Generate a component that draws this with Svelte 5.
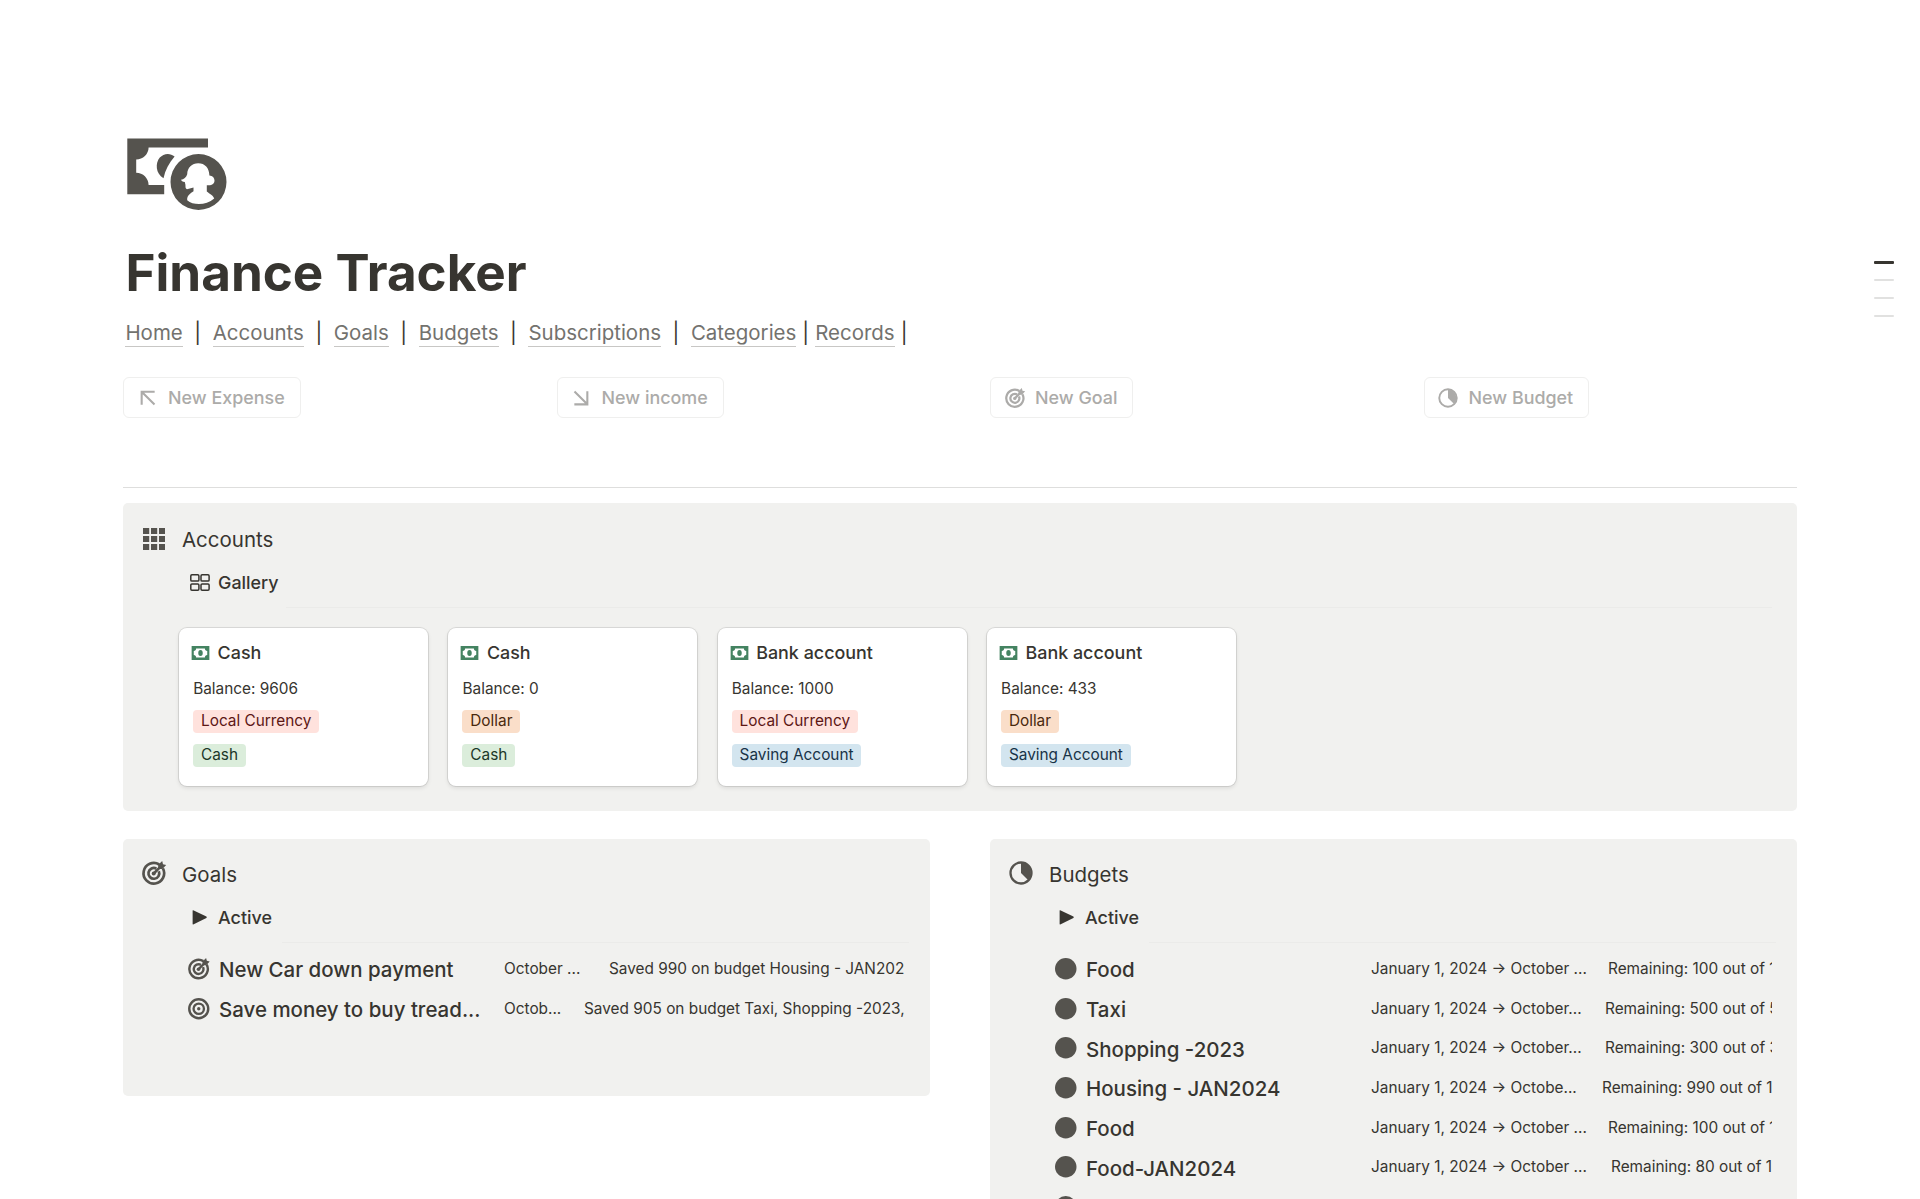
<script lang="ts">
  type Tag = { text: string; color: 'red' | 'orange' | 'green' | 'blue' };
  type Account = { name: string; balance: number; tags: Tag[] };
  type Row = { icon: string; name: string; date: string; dateWidth: number; note: string };

  const links = [
    { label: 'Home', tight: false },
    { label: 'Accounts', tight: false },
    { label: 'Goals', tight: false },
    { label: 'Budgets', tight: false },
    { label: 'Subscriptions', tight: false },
    { label: 'Categories', tight: true },
    { label: 'Records', tight: true }
  ];

  const actions = [
    { icon: 'up-left', label: 'New Expense' },
    { icon: 'down-right', label: 'New income' },
    { icon: 'goal', label: 'New Goal' },
    { icon: 'pie', label: 'New Budget' }
  ];

  const local: Tag = { text: 'Local Currency', color: 'red' };
  const dollar: Tag = { text: 'Dollar', color: 'orange' };
  const cash: Tag = { text: 'Cash', color: 'green' };
  const saving: Tag = { text: 'Saving Account', color: 'blue' };

  const accounts: Account[] = [
    { name: 'Cash', balance: 9606, tags: [local, cash] },
    { name: 'Cash', balance: 0, tags: [dollar, cash] },
    { name: 'Bank account', balance: 1000, tags: [local, saving] },
    { name: 'Bank account', balance: 433, tags: [dollar, saving] }
  ];

  const goals: Row[] = [
    { icon: 'goal', name: 'New Car down payment', date: 'October ...', dateWidth: 105, note: 'Saved 990 on budget Housing - JAN202' },
    { icon: 'target', name: 'Save money to buy tread...', date: 'Octob...', dateWidth: 80, note: 'Saved 905 on budget Taxi, Shopping -2023,' }
  ];

  const budgets: Row[] = [
    { icon: 'dot', name: 'Food', date: 'January 1, 2024 → October ...', dateWidth: 237, note: 'Remaining: 100 out of 1' },
    { icon: 'dot', name: 'Taxi', date: 'January 1, 2024 → October...', dateWidth: 234, note: 'Remaining: 500 out of 5' },
    { icon: 'dot', name: 'Shopping -2023', date: 'January 1, 2024 → October...', dateWidth: 234, note: 'Remaining: 300 out of 3' },
    { icon: 'dot', name: 'Housing - JAN2024', date: 'January 1, 2024 → Octobe...', dateWidth: 231, note: 'Remaining: 990 out of 1' },
    { icon: 'dot', name: 'Food', date: 'January 1, 2024 → October ...', dateWidth: 237, note: 'Remaining: 100 out of 1' },
    { icon: 'dot', name: 'Food-JAN2024', date: 'January 1, 2024 → October ...', dateWidth: 240, note: 'Remaining: 80 out of 1' },
    { icon: 'dot', name: '', date: '', dateWidth: 237, note: '' }
  ];

  const boards = [
    { title: 'Goals', icon: 'goal', rows: goals },
    { title: 'Budgets', icon: 'pie', rows: budgets }
  ];
</script>

{#snippet glyph(name: string)}
  <svg class="glyph" viewBox="0 0 24 24" aria-hidden="true">
    {#if name === 'up-left'}
      <path d="M4.4 20V4.4H20M4.4 4.4L19.8 19.8" fill="none" stroke="currentColor" stroke-width="2.5" />
    {:else if name === 'down-right'}
      <path d="M19.6 4V19.6H4M19.6 19.6L4.2 4.2" fill="none" stroke="currentColor" stroke-width="2.5" />
    {:else if name === 'goal'}
      <path
        d="M17.2 3.5A10.3 10.3 0 1 0 20.9 7.4M14.4 7.6A5.4 5.4 0 1 0 16.8 10.2M11.6 12.6L18.6 5.6"
        fill="none"
        stroke="currentColor"
        stroke-width="2.7"
      />
      <circle cx="11.7" cy="12.5" r="2" fill="currentColor" />
      <path d="M16.2 8V3.8L20.2 0L21 3.2L24.2 4L20.4 8Z" fill="currentColor" />
    {:else if name === 'target'}
      <circle cx="12" cy="12" r="10.6" fill="none" stroke="currentColor" stroke-width="2.7" />
      <circle cx="12" cy="12" r="5.8" fill="none" stroke="currentColor" stroke-width="2.6" />
      <circle cx="12" cy="12" r="1.9" fill="currentColor" />
    {:else if name === 'pie'}
      <circle cx="12" cy="12" r="10.5" fill="none" stroke="currentColor" stroke-width="2.3" />
      <path d="M12 2V12L19 19A10 10 0 0 0 12 2Z" fill="currentColor" />
    {:else if name === 'dot'}
      <circle cx="12" cy="12" r="12" fill="currentColor" />
    {/if}
  </svg>
{/snippet}

<div class="page">
  <main class="content">
    <svg class="page-icon" viewBox="0 0 100 73" aria-hidden="true">
      <path d="M0.3 0.6H81V9.5H21.6C21.6 16 16 21.5 9.2 21.5V34.8C16 34.8 21.6 40.3 21.6 47H37.2V56.2H0.3Z" />
      <path d="M47.6 18.6C43 14.4 36.4 15.4 32.8 19.6C28 25.2 28.6 35.8 36.5 40.3C38.2 32 42 25 47.6 18.6Z" />
      <path
        fill-rule="evenodd"
        d="M71.5 16A28 28 0 1 0 71.5 72A28 28 0 1 0 71.5 16ZM60.2 36.2C60.4 29.4 65 25.2 71.2 25.2C78 25.2 82.2 30 82.4 37.4C85.6 37.6 87.5 39.8 87.5 42.6C87.5 45.8 84.6 48 79.8 47.2V53.4C82.6 55.8 86.4 57.2 87.2 60.6C79 67.6 66.4 67.6 60.2 62.2C59.8 57.4 63.6 55.2 66.5 53.2V49.4L60 51.2C57.8 50.4 58.9 48 58.2 45.8L57.8 44C55.6 44 54.4 43 54 41.8C56.6 41.2 59.6 39.2 60.2 36.2Z"
      />
    </svg>

    <h1>Finance Tracker</h1>

    <nav class="links">
      {#each links as link}
        <a href="#{link.label.toLowerCase()}">{link.label}</a>
        <span class="sep" class:tight={link.tight}>|</span>
      {/each}
    </nav>

    <div class="actions">
      {#each actions as action}
        <div class="action-col">
          <button type="button" class="action">
            {@render glyph(action.icon)}
            <span>{action.label}</span>
          </button>
        </div>
      {/each}
    </div>

    <hr />

    <section class="callout accounts">
      <header class="callout-head">
        <svg class="grid-icon" viewBox="0 0 22 22" aria-hidden="true">
          {#each [0, 8, 16] as y}
            {#each [0, 8, 16] as x}
              <rect {x} {y} width="6.2" height="6" />
            {/each}
          {/each}
        </svg>
        <h2>Accounts</h2>
      </header>
      <div class="tab">
        <svg class="tab-icon" viewBox="0 0 20 17" aria-hidden="true">
          {#each [0.8, 9.9] as y}
            {#each [0.8, 11] as x}
              <rect {x} {y} width="8.1" height="6.3" rx="1.1" fill="none" stroke="currentColor" stroke-width="1.5" />
            {/each}
          {/each}
        </svg>
        <span>Gallery</span>
      </div>
      <div class="rule"></div>
      <div class="gallery">
        {#each accounts as account}
          <article class="card">
            <div class="card-title">
              <svg class="cash-icon" viewBox="0 0 19 15" aria-hidden="true">
                <rect width="19" height="15" fill="#448361" />
                <path d="M4.8 2.8H14.2C14.2 4.4 15.2 5.4 16.7 5.4V9.6C15.2 9.6 14.2 10.6 14.2 12.2H4.8C4.8 10.6 3.8 9.6 2.3 9.6V5.4C3.8 5.4 4.8 4.4 4.8 2.8Z" fill="#fff" />
                <ellipse cx="9.5" cy="7.5" rx="2.4" ry="3.1" fill="#448361" />
              </svg>
              <span>{account.name}</span>
            </div>
            <div class="balance">Balance: {account.balance}</div>
            {#each account.tags as tag}
              <span class="tag {tag.color}">{tag.text}</span>
            {/each}
          </article>
        {/each}
      </div>
    </section>

    <div class="boards">
      {#each boards as board}
        <section class="callout board">
          <header class="callout-head">
            {@render glyph(board.icon)}
            <h2>{board.title}</h2>
          </header>
          <div class="tab">
            <svg class="tab-icon" viewBox="0 0 20 17" aria-hidden="true">
              <path d="M3.2 1.2L16.4 7.6Q17.2 8.2 16.4 8.9L3.2 15.4Q2.6 15.6 2.6 14.8V1.8Q2.6 1 3.2 1.2Z" fill="currentColor" />
            </svg>
            <span>Active</span>
          </div>
          <div class="rule"></div>
          <div class="list">
            {#each board.rows as row}
              <div class="row">
                {@render glyph(row.icon)}
                <span class="row-name">{row.name}</span>
                <span class="row-date" style="width: {row.dateWidth}px">{row.date}</span>
                <span class="row-note">{row.note}</span>
              </div>
            {/each}
          </div>
        </section>
      {/each}
    </div>
  </main>

  <aside class="outline">
    <span class="mark current"></span>
    <span class="mark"></span>
    <span class="mark"></span>
    <span class="mark"></span>
  </aside>
</div>

<style>
  :global(body) {
    margin: 0;
    background: #fff;
  }

  .page {
    display: flex;
    justify-content: space-between;
    box-sizing: border-box;
    width: 100%;
    height: 1199px;
    padding: 0 26px 0 123px;
    overflow: hidden;
    font-family: Inter, 'Liberation Sans', sans-serif;
    font-size: 20.48px;
    color: #373530;
  }

  .content {
    display: flex;
    flex-direction: column;
    flex: none;
    width: 1674px;
    padding-top: 138px;
  }

  .content > * {
    flex-shrink: 0;
  }

  .glyph {
    flex: none;
    display: block;
    overflow: visible;
  }

  .page-icon {
    width: 100px;
    height: 73px;
    margin-left: 4px;
    fill: #55534e;
  }

  h1 {
    margin: 30px 0 14px 2.4px;
    font-size: 51.2px;
    font-weight: 700;
    line-height: 62px;
  }

  .links {
    display: flex;
    height: 31px;
    margin-left: 2.4px;
    line-height: 31px;
  }

  .links a {
    align-self: center;
    line-height: 26px;
    color: #73726e;
    text-decoration: none;
    border-bottom: 1px solid #c8c7c5;
    margin-top: 2px;
  }

  .sep {
    width: 29.9px;
    text-align: center;
  }

  .sep.tight {
    width: 18.8px;
  }

  .actions {
    display: grid;
    grid-template-columns: repeat(4, 433.5px);
    margin-top: 29px;
  }

  .action {
    display: inline-flex;
    align-items: center;
    gap: 10.5px;
    box-sizing: border-box;
    height: 41px;
    padding: 0 15px 0 13.5px;
    font: 500 17.92px/27px Inter, 'Liberation Sans', sans-serif;
    color: #acaba9;
    background: #fff;
    border: 1px solid #efefee;
    border-radius: 6px;
  }

  .action-col {
    display: flex;
  }

  .action .glyph {
    width: 20px;
    height: 20px;
  }

  hr {
    width: 100%;
    height: 1px;
    margin: 69px 0 15px;
    border: 0;
    background: #dededd;
  }

  .callout {
    display: flex;
    flex-direction: column;
    box-sizing: border-box;
    padding: 20px 25px 0 19px;
    background: #f1f1ef;
    border-radius: 5px;
  }

  .accounts {
    height: 308px;
    padding-top: 21px;
  }

  .callout-head {
    display: flex;
    align-items: center;
    gap: 16px;
    height: 31px;
  }

  .callout-head .glyph {
    width: 24px;
    height: 24px;
    margin-top: -4px;
    color: #55534e;
  }

  .grid-icon {
    width: 22px;
    height: 22px;
    margin: -1px 1px 0;
    fill: #55534e;
  }

  h2 {
    margin: 0;
    font-size: 20.48px;
    font-weight: 400;
    line-height: 31px;
  }

  .tab {
    display: flex;
    align-items: center;
    gap: 8px;
    height: 27px;
    margin: 14px 0 11px 48px;
    font-size: 17.92px;
    font-weight: 500;
    line-height: 27px;
  }

  .tab-icon {
    width: 20px;
    height: 17px;
  }

  .rule {
    height: 1px;
    flex: none;
    margin-left: 144px;
    background: #ebebe9;
  }

  .gallery {
    display: grid;
    grid-template-columns: repeat(4, 249px);
    gap: 20.3px;
    margin: 20px 0 0 37.2px;
  }

  .card {
    display: flex;
    flex-direction: column;
    align-items: flex-start;
    box-sizing: border-box;
    height: 158px;
    padding: 11px 13px 0 14px;
    background: #fff;
    border-radius: 8px;
    box-shadow: 0 0 0 1px rgba(15, 15, 15, 0.1), 0 2px 4px rgba(15, 15, 15, 0.1);
  }

  .card-title {
    display: flex;
    align-items: center;
    gap: 7.4px;
    height: 27px;
    margin-left: -2px;
    font-size: 17.92px;
    font-weight: 500;
  }

  .cash-icon {
    width: 19px;
    height: 14px;
  }

  .balance {
    margin: 10px 0 9px;
    font-size: 15.36px;
    line-height: 25px;
  }

  .tag {
    height: 23px;
    margin-bottom: 10.5px;
    padding: 0 7.8px;
    border-radius: 4px;
    font-size: 15.36px;
    line-height: 22px;
    white-space: nowrap;
  }

  .red {
    color: #5d1715;
    background: #ffe2dd;
  }

  .orange {
    color: #49290e;
    background: #fadec9;
  }

  .green {
    color: #1c3829;
    background: #dbeddb;
  }

  .blue {
    color: #183347;
    background: #d3e5ef;
  }

  .boards {
    display: grid;
    grid-template-columns: 807px 807px;
    justify-content: space-between;
    align-items: start;
    margin-top: 28px;
  }

  .board {
    min-height: 257px;
  }

  .board .rule {
    margin: 0 -4px 0 140px;
  }

  .list {
    margin: 7px 0 0 46px;
    overflow: hidden;
  }

  .row {
    display: flex;
    align-items: center;
    height: 39.67px;
    overflow: hidden;
    white-space: nowrap;
  }

  .row .glyph {
    width: 21.5px;
    height: 21.5px;
    margin: -2px 9.5px 0 0;
    color: #55534e;
  }

  .row-name {
    flex: none;
    width: 285px;
    font-weight: 500;
  }

  .row-date,
  .row-note {
    padding-bottom: 2.5px;
    font-size: 15.36px;
  }

  .row-date {
    flex: none;
  }

  .outline {
    display: flex;
    flex-direction: column;
    gap: 16px;
    padding-top: 261px;
  }

  .mark {
    width: 20px;
    height: 2px;
    border-radius: 1px;
    background: #e1e1e0;
  }

  .current {
    height: 3px;
    margin-bottom: -1px;
    background: #373530;
  }
</style>
